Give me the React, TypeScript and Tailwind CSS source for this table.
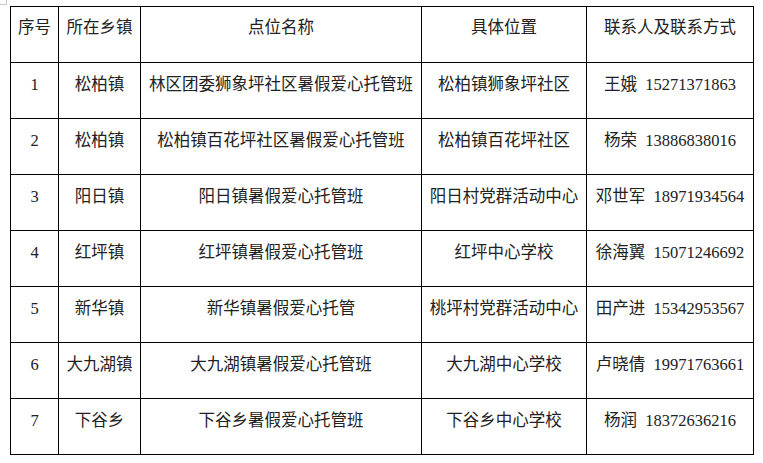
import React from "react";

const rows = [
  ["1", "松柏镇", "林区团委狮象坪社区暑假爱心托管班", "松柏镇狮象坪社区", "王娥", "15271371863"],
  ["2", "松柏镇", "松柏镇百花坪社区暑假爱心托管班", "松柏镇百花坪社区", "杨荣", "13886838016"],
  ["3", "阳日镇", "阳日镇暑假爱心托管班", "阳日村党群活动中心", "邓世军", "18971934564"],
  ["4", "红坪镇", "红坪镇暑假爱心托管班", "红坪中心学校", "徐海翼", "15071246692"],
  ["5", "新华镇", "新华镇暑假爱心托管", "桃坪村党群活动中心", "田产进", "15342953567"],
  ["6", "大九湖镇", "大九湖镇暑假爱心托管班", "大九湖中心学校", "卢晓倩", "19971763661"],
  ["7", "下谷乡", "下谷乡暑假爱心托管班", "下谷乡中心学校", "杨润", "18372636216"],
];

const headers = ["序号", "所在乡镇", "点位名称", "具体位置", "联系人及联系方式"];

export default function App() {
  return (
    <div
      className="relative w-[763px] h-[463px] bg-white pl-[10px] pt-[6px] text-[16.5px] text-[#222]"
      style={{ fontFamily: '"Liberation Serif", "Noto Sans CJK SC", serif' }}
    >
      {/* page margin mark */}
      <div className="absolute left-0 top-0 w-[7px] h-[5px] border-r border-b border-[#c8c8c8]" />

      <table className="table-fixed border-collapse w-[743px]">
        <colgroup>
          <col className="w-[48px]" />
          <col className="w-[82px]" />
          <col className="w-[281px]" />
          <col className="w-[165px]" />
          <col className="w-[167px]" />
        </colgroup>
        <thead>
          <tr className="h-[56px]">
            {headers.map((h) => (
              <th
                key={h}
                className="border border-black align-top pt-[12px] font-normal leading-[18px] text-center whitespace-nowrap"
              >
                {h}
              </th>
            ))}
          </tr>
        </thead>
        <tbody>
          {rows.map((r) => (
            <tr key={r[0]} className="h-[56px]">
              {r.slice(0, 4).map((c, i) => (
                <td
                  key={i}
                  className="border border-black align-top pt-[13px] leading-[18px] text-center whitespace-nowrap"
                >
                  {c}
                </td>
              ))}
              <td className="border border-black align-top pt-[13px] leading-[18px] text-center whitespace-nowrap">
                {r[4]}&nbsp;&nbsp;{r[5]}
              </td>
            </tr>
          ))}
        </tbody>
      </table>
    </div>
  );
}
